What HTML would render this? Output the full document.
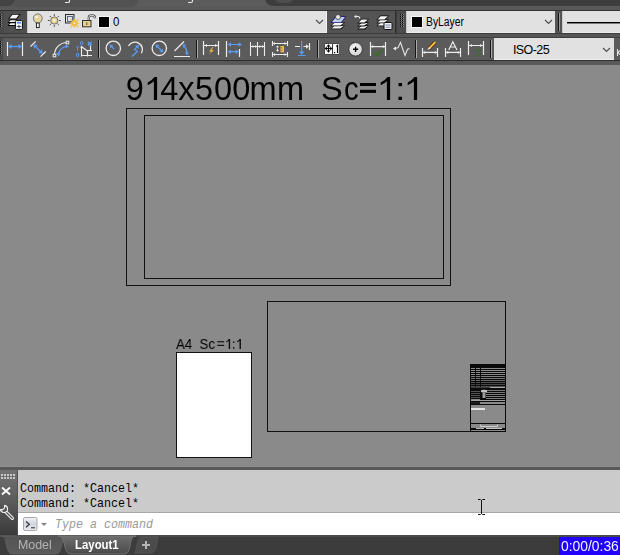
<!DOCTYPE html>
<html><head><meta charset="utf-8"><style>
*{margin:0;padding:0;box-sizing:border-box}
html,body{width:620px;height:555px;overflow:hidden;background:#8a8a8a;font-family:"Liberation Sans",sans-serif;position:relative}
.a{position:absolute}
#ov{position:absolute;left:0;top:0;width:620px;height:555px}
</style></head><body>

<!-- ===== top strip ===== -->
<div class="a" style="left:0;top:0;width:620px;height:10px;background:#5b5b5b"></div>
<div class="a" style="left:10px;top:-10px;width:129px;height:17px;background:#525252;border-radius:0 0 8px 0;box-shadow:1px 0 0 #626262"></div>
<div class="a" style="left:-20px;top:-10px;width:35px;height:16px;background:#434343;border-radius:0 0 8px 0;box-shadow:1px 1px 0 #555"></div>
<div class="a" style="left:265px;top:-10px;width:400px;height:16px;background:#3d3d3d;border-radius:0 0 0 8px"></div>
<div class="a" style="left:275px;top:-10px;width:18px;height:13px;background:#4d4d4d;border-radius:0 0 5px 5px"></div>
<div class="a" style="left:0;top:7px;width:620px;height:3px;background:#585858"></div>
<div class="a" style="left:0;top:10px;width:620px;height:1px;background:#333"></div>

<!-- ===== row 1 ===== -->
<div class="a" style="left:0;top:11px;width:620px;height:22px;background:#545454"></div>
<div class="a" style="left:0;top:11px;width:4px;height:22px;background:#4a4a4a"></div>
<div class="a" style="left:4px;top:11px;width:23px;height:22px;background:#4f4f4f"></div>
<div class="a" style="left:27px;top:11px;width:300px;height:22px;background:#e1e1e1"></div>
<div class="a" style="left:395px;top:11px;width:2px;height:22px;background:#3c3c3c"></div>
<div class="a" style="left:397px;top:11px;width:9px;height:22px;background:#4c4c4c"></div>
<div class="a" style="left:406px;top:11px;width:149px;height:22px;background:#e1e1e1"></div>
<div class="a" style="left:562px;top:11px;width:58px;height:22px;background:#e1e1e1"></div>
<div class="a" style="left:567px;top:22px;width:53px;height:1px;background:#000"></div><div class="a" style="left:567px;top:23px;width:53px;height:1px;background:#7a7a7a"></div>
<div class="a" style="left:112.6px;top:14px;font-size:13px;line-height:16px;color:#000;transform:scaleX(0.88);transform-origin:0 0">0</div>
<div class="a" style="left:426px;top:13.5px;font-size:12px;line-height:16px;color:#000;transform:scaleX(0.86);transform-origin:0 0;white-space:nowrap">ByLayer</div>

<div class="a" style="left:27px;top:32px;width:300px;height:1px;background:#ececec"></div><div class="a" style="left:406px;top:32px;width:149px;height:1px;background:#ececec"></div><div class="a" style="left:562px;top:32px;width:58px;height:1px;background:#ececec"></div>
<!-- ===== gap row1/row2 ===== -->
<div class="a" style="left:0;top:33px;width:620px;height:1px;background:#3c3c3c"></div>
<div class="a" style="left:0;top:34px;width:620px;height:3px;background:#565656"></div>
<div class="a" style="left:0;top:37px;width:620px;height:1px;background:#3e3e3e"></div>

<!-- ===== row 2 ===== -->
<div class="a" style="left:0;top:38px;width:620px;height:22px;background:#5b5b5b"></div>
<div class="a" style="left:0;top:38px;width:3px;height:22px;background:#4a4a4a"></div>
<div class="a" style="left:494px;top:38px;width:120px;height:22px;background:#e1e1e1"></div>
<div class="a" style="left:513px;top:42px;font-size:12.5px;line-height:16px;color:#000;letter-spacing:-0.6px">ISO-25</div>
<div class="a" style="left:494px;top:59px;width:120px;height:1px;background:#f0f0f0"></div><div class="a" style="left:0;top:60px;width:620px;height:1px;background:#2e2e2e"></div>
<div class="a" style="left:0;top:61px;width:620px;height:4px;background:#595959"></div>

<!-- ===== drawing ===== -->
<div class="a" style="will-change:transform;left:0;top:69px;width:620px;height:40px;font-size:32.5px;line-height:40px;color:#000"><span class="a" style="left:125.7px;top:0">9</span><span class="a" style="left:160.3px;top:0">4</span><span class="a" style="left:178.2px;top:0">x</span><span class="a" style="left:194.9px;top:0">5</span><span class="a" style="left:214px;top:0">0</span><span class="a" style="left:232.2px;top:0">0</span><span class="a" style="left:249.6px;top:0">m</span><span class="a" style="left:276.9px;top:0">m</span><span class="a" style="left:321.1px;top:0">S</span><span class="a" style="left:343.5px;top:0;transform:scaleX(0.9);transform-origin:0 0">c</span></div>
<div class="a" style="left:126px;top:108px;width:325px;height:178px;border:1px solid #111"></div>
<div class="a" style="left:144px;top:115px;width:300px;height:164px;border:1px solid #111"></div>
<div class="a" style="left:267px;top:301px;width:239px;height:131px;border:1px solid #111"></div>
<div class="a" style="will-change:transform;left:176px;top:336px;font-size:14.4px;line-height:17px;color:#000;white-space:pre;transform:scaleX(0.92);transform-origin:0 0">A4  Sc</div>
<div class="a" style="left:176px;top:352px;width:76px;height:106px;border:1px solid #111;background:#fff"></div>

<!-- ===== bottom ===== -->
<div class="a" style="left:0;top:466px;width:620px;height:1px;background:#8f8f8f"></div><div class="a" style="left:0;top:467px;width:620px;height:3px;background:#585858"></div>
<div class="a" style="left:0;top:470px;width:18px;height:65px;background:linear-gradient(#727272,#5a5a5a 50%,#3a3a3a)"></div>
<div class="a" style="left:17px;top:470px;width:1px;height:65px;background:#505050"></div>
<div class="a" style="left:18px;top:470px;width:602px;height:42px;background:#cbcbcb"></div>
<div class="a" style="left:18px;top:512px;width:602px;height:1px;background:#a8a8a8"></div>
<div class="a" style="left:18px;top:513px;width:602px;height:22px;background:#fff"></div>
<div class="a" style="left:20px;top:482.3px;font-family:'Liberation Mono',monospace;font-size:11.67px;line-height:13.1px;color:#000;white-space:pre;transform:scaleY(1.15);transform-origin:0 0">Command: *Cancel*
Command: *Cancel*</div>
<div class="a" style="left:55px;top:516.6px;font-family:'Liberation Mono',monospace;font-style:italic;font-size:11.67px;line-height:15px;color:#9a9a9a;white-space:pre;transform:scaleY(1.12);transform-origin:0 0">Type a command</div>
<div class="a" style="left:0;top:535px;width:620px;height:20px;background:#3c3c3c"></div>
<div class="a" style="left:559px;top:536px;width:61px;height:19px;background:#2200ff"></div>

<svg id="ov" width="620" height="555" viewBox="0 0 620 555">
<!-- row1 grip -->
<g fill="#050505"><rect x="0" y="14" width="1" height="1"/><rect x="0" y="16" width="1" height="1"/><rect x="0" y="18" width="1" height="1"/><rect x="0" y="20" width="1" height="1"/><rect x="0" y="22" width="1" height="1"/><rect x="0" y="24" width="1" height="1"/><rect x="0" y="26" width="1" height="1"/></g>
<g fill="#8c8c8c"><rect x="1" y="14" width="1" height="1"/><rect x="1" y="16" width="1" height="1"/><rect x="1" y="18" width="1" height="1"/><rect x="1" y="20" width="1" height="1"/><rect x="1" y="22" width="1" height="1"/><rect x="1" y="24" width="1" height="1"/><rect x="1" y="26" width="1" height="1"/></g>
<!-- layer properties icon -->
<g fill="#0a0a0a"><path d="M7.5 26 L10 22.6 L16.5 22.6 L16 26 Z"/><path d="M7.5 23 L10 19.6 L17.5 19.6 L17 23 Z"/><path d="M8 19.3 L11.8 13.9 L20.6 13.9 L16.8 19.3 Z"/></g>
<g fill="#f6f6f6"><path d="M9 25 L10.5 23.2 L15.5 23.2 L15.5 25 Z"/><path d="M9 22 L10.5 20.2 L16.5 20.2 L16 22 Z"/><path d="M9.4 18.4 L12.4 14.8 L19 14.8 L16.2 18.4 Z"/></g>
<rect x="15.4" y="20.6" width="7" height="8.8" rx=".8" fill="#f6f6f6" stroke="#111" stroke-width="1"/>
<rect x="16.9" y="22" width="4.1" height="1.6" fill="#4a88ee"/>
<path d="M16.8 26.5 H21.2" stroke="#333" stroke-width=".9"/>
<path d="M19 25 L20.2 26.5 L19 28 L17.8 26.5 Z" fill="none" stroke="#5a7ab0" stroke-width=".8"/>
<!-- combobox highlight corner -->
<rect x="27" y="11" width="1" height="22" fill="#c8c8c8"/>
<!-- bulb -->
<path d="M36.3 23.2 Q33.4 21.2 33.4 18.3 A4.4 4.4 0 0 1 42.2 18.3 Q42.2 21.2 39.3 23.2 Z" fill="#e5d49e" stroke="#6e6e6e" stroke-width=".9"/>
<circle cx="36.4" cy="16.9" r="1.2" fill="#fff"/>
<rect x="36.4" y="23" width="2.8" height="4.6" fill="#fff" stroke="#111" stroke-width=".9"/>
<!-- sun -->
<path d="M58.90 20.50 L60.70 20.50 M57.55 23.75 L58.83 25.03 M54.30 25.10 L54.30 26.90 M51.05 23.75 L49.77 25.03 M49.70 20.50 L47.90 20.50 M51.05 17.25 L49.77 15.97 M54.30 15.90 L54.30 14.10 M57.55 17.25 L58.83 15.97 " stroke="#3a3a3a" stroke-width=".9"/>
<circle cx="54.3" cy="20.5" r="3.6" fill="#e6d08e" stroke="#6a6a6a" stroke-width=".9"/>
<rect x="53.2" y="19.4" width="2.2" height="2.2" fill="#fdfdfd"/>
<!-- vp freeze -->
<rect x="65.5" y="14.5" width="8.5" height="8.5" fill="none" stroke="#2a2a2a" stroke-width="1"/>
<rect x="67.5" y="16.5" width="5" height="5" fill="none" stroke="#5a6b82" stroke-width="1"/>
<g fill="#f0bf4c"><circle cx="74.5" cy="23.3" r="3.4"/><path d="M74.5 18.3 L75.3 20 L73.7 20Z M74.5 28.3 L75.3 26.6 L73.7 26.6Z M69.5 23.3 L71.2 22.5 L71.2 24.1Z M79.5 23.3 L77.8 22.5 L77.8 24.1Z"/><circle cx="71.2" cy="20" r=".9"/><circle cx="77.8" cy="20" r=".9"/><circle cx="71.2" cy="26.6" r=".9"/><circle cx="77.8" cy="26.6" r=".9"/></g>
<circle cx="74.5" cy="23.3" r=".8" fill="#fff"/>
<!-- lock -->
<path d="M88.8 20.5 V17.3 Q88.8 15.3 91.8 15.3 Q94.8 15.3 94.8 17.5 V18.3" fill="none" stroke="#3a3a3a" stroke-width="2.2"/>
<path d="M88.8 20.5 V17.3 Q88.8 15.3 91.8 15.3 Q94.8 15.3 94.8 17.5 V18.3" fill="none" stroke="#f2f2f2" stroke-width=".9"/>
<rect x="82.5" y="20.5" width="8.5" height="6.3" fill="#e6d08c" stroke="#333" stroke-width="1"/>
<rect x="86.2" y="22.3" width="1.2" height="2.8" fill="#6a6a6a"/>
<!-- color square -->
<rect x="98" y="16" width="12" height="12" fill="#f6f6f6"/>
<rect x="99" y="17" width="10" height="10" fill="#000"/>
<!-- chevron -->
<path d="M316 20 L319.5 23.5 L323 20" fill="none" stroke="#505050" stroke-width="1.2"/>
<rect x="326" y="11" width="1" height="22" fill="#f4f4f4"/>
<!-- make current -->
<path d="M330.4 29.2 L334.2 25.1 L345.0 25.1 L341.2 29.2 Z" fill="#080808"/><path d="M331.6 28.4 L334.6 25.8 L343.8 25.8 L340.4 28.4 Z" fill="#f6f6f6"/><path d="M330.4 26.2 L334.2 22.1 L345.0 22.1 L341.2 26.2 Z" fill="#080808"/><path d="M331.6 25.4 L334.6 22.8 L343.8 22.8 L340.4 25.4 Z" fill="#f6f6f6"/><path d="M330.2 23 L335.4 16.2 L346.6 16.2 L341.4 23 Z" fill="#2a1070"/><path d="M331.8 22.2 L335.9 17 L345 17 L341 22.2 Z" fill="#b9d1f0"/><circle cx="338" cy="17" r="2.5" fill="#e8e8e8" stroke="#3a3a3a" stroke-width=".8"/>
<!-- layer previous -->
<path d="M357.4 29.4 L361.2 25.3 L369.0 25.3 L365.2 29.4 Z" fill="#080808"/><path d="M358.6 28.6 L361.6 26.0 L367.8 26.0 L364.4 28.6 Z" fill="#f6f6f6"/><path d="M357.4 26.4 L361.2 22.3 L369.0 22.3 L365.2 26.4 Z" fill="#080808"/><path d="M358.6 25.6 L361.6 23.0 L367.8 23.0 L364.4 25.6 Z" fill="#f6f6f6"/><path d="M357.4 23.4 L361.2 18.7 L369.0 18.7 L365.2 23.4 Z" fill="#080808"/><path d="M358.6 22.6 L361.6 19.4 L367.8 19.4 L364.4 22.6 Z" fill="#f6f6f6"/><path d="M355.5 16.5 H358 Q359.7 16.5 359.7 18.5" fill="none" stroke="#e8e8e8" stroke-width="1.2"/><path d="M354 16.5 L356.3 14.8 L356.3 18.2 Z" fill="#e8e8e8"/>
<!-- layer states -->
<path d="M376.4 26.2 L380.2 22.1 L389.0 22.1 L385.2 26.2 Z" fill="#080808"/><path d="M377.6 25.4 L380.6 22.8 L387.8 22.8 L384.4 25.4 Z" fill="#f6f6f6"/><path d="M376.4 23.2 L380.2 19.1 L389.0 19.1 L385.2 23.2 Z" fill="#080808"/><path d="M377.6 22.4 L380.6 19.8 L387.8 19.8 L384.4 22.4 Z" fill="#f6f6f6"/><path d="M376.4 20.2 L380.2 15.5 L389.0 15.5 L385.2 20.2 Z" fill="#080808"/><path d="M377.6 19.4 L380.6 16.2 L387.8 16.2 L384.4 19.4 Z" fill="#f6f6f6"/><rect x="384" y="22.5" width="8" height="7" rx="1" fill="#eef0f4" stroke="#101010" stroke-width="1"/><path d="M385.5 25 H390.5 M385.5 27.2 H390.5" stroke="#7a8aa8" stroke-width="1"/>
<!-- separator & grip 2 -->
<rect x="395" y="11" width="1" height="22" fill="#2e2e2e"/>
<g fill="#080808"><rect x="400" y="14" width="1" height="1"/><rect x="402" y="14" width="1" height="1"/><rect x="400" y="16" width="1" height="1"/><rect x="402" y="16" width="1" height="1"/><rect x="400" y="18" width="1" height="1"/><rect x="402" y="18" width="1" height="1"/><rect x="400" y="20" width="1" height="1"/><rect x="402" y="20" width="1" height="1"/><rect x="400" y="22" width="1" height="1"/><rect x="402" y="22" width="1" height="1"/><rect x="400" y="24" width="1" height="1"/><rect x="402" y="24" width="1" height="1"/><rect x="400" y="26" width="1" height="1"/><rect x="402" y="26" width="1" height="1"/></g>
<g fill="#8a8a8a"><rect x="401" y="14" width="1" height="1"/><rect x="403" y="14" width="1" height="1"/><rect x="401" y="16" width="1" height="1"/><rect x="403" y="16" width="1" height="1"/><rect x="401" y="18" width="1" height="1"/><rect x="403" y="18" width="1" height="1"/><rect x="401" y="20" width="1" height="1"/><rect x="403" y="20" width="1" height="1"/><rect x="401" y="22" width="1" height="1"/><rect x="403" y="22" width="1" height="1"/><rect x="401" y="24" width="1" height="1"/><rect x="403" y="24" width="1" height="1"/><rect x="401" y="26" width="1" height="1"/><rect x="403" y="26" width="1" height="1"/></g>
<rect x="406" y="11" width="1" height="22" fill="#c8c8c8"/>
<rect x="411" y="16" width="12" height="12" fill="#f6f6f6"/>
<rect x="412" y="17" width="10" height="10" fill="#000"/>
<path d="M545 20 L548.5 23.5 L552 20" fill="none" stroke="#505050" stroke-width="1.2"/>
<!-- grip 3 -->
<rect x="558" y="13" width="1" height="18" fill="#141414"/>
<rect x="559" y="13" width="1" height="18" fill="#9a9a9a"/>
<rect x="562" y="11" width="1" height="22" fill="#c8c8c8"/>
<!-- row2 grip -->
<g fill="#050505"><rect x="0" y="41" width="1" height="1"/><rect x="0" y="43" width="1" height="1"/><rect x="0" y="45" width="1" height="1"/><rect x="0" y="47" width="1" height="1"/><rect x="0" y="49" width="1" height="1"/><rect x="0" y="51" width="1" height="1"/><rect x="0" y="53" width="1" height="1"/></g>
<g fill="#8c8c8c"><rect x="1" y="41" width="1" height="1"/><rect x="1" y="43" width="1" height="1"/><rect x="1" y="45" width="1" height="1"/><rect x="1" y="47" width="1" height="1"/><rect x="1" y="49" width="1" height="1"/><rect x="1" y="51" width="1" height="1"/><rect x="1" y="53" width="1" height="1"/></g>
<!-- separators -->
<g fill="#161616"><rect x="98" y="40" width="1" height="18"/><rect x="196" y="40" width="1" height="18"/><rect x="317" y="40" width="1" height="18"/><rect x="415" y="40" width="1" height="18"/><rect x="490" y="40" width="1" height="18"/></g>
<g fill="#aaaaaa"><rect x="99" y="40" width="1" height="18"/><rect x="197" y="40" width="1" height="18"/><rect x="318" y="40" width="1" height="18"/><rect x="416" y="40" width="1" height="18"/><rect x="491" y="40" width="1" height="18"/></g>
<g fill="none" stroke-linecap="butt">
<!-- linear -->
<path d="M7.5 42 V56 M22.5 42 V56" stroke="#ececec" stroke-width="1.2"/>
<path d="M10 46.5 H20" stroke="#5b9bf5" stroke-width="1.3"/>
<!-- aligned -->
<path d="M30.5 46.5 L35.7 41.3 M40.5 56.7 L45.7 51.5" stroke="#ececec" stroke-width="1.2"/>
<path d="M34.5 45.5 L41.5 52.5" stroke="#5b9bf5" stroke-width="1.2"/>
<!-- arc length -->
<path d="M54.5 55 A12.5 12.5 0 0 1 67 42.5" stroke="#ececec" stroke-width="1.2"/>
<path d="M58.5 54 A9.5 9.5 0 0 1 67 46.3" stroke="#5b9bf5" stroke-width="1.3"/>
<!-- ordinate -->
<path d="M81.5 46.5 V56.5 M81 55.5 H92 M82 47 L87.5 51 M87.5 51 V56.5 M87.5 50.5 H92 M90.5 45.5 V50.5" stroke="#ececec" stroke-width="1.15"/><path d="M81.5 45.8 L80 47.6 H83 Z" fill="#ececec"/>
<!-- radius -->
<circle cx="113.3" cy="48.3" r="7.2" stroke="#ececec" stroke-width="1.3"/>
<path d="M114 49 L110.5 45.5" stroke="#5b9bf5" stroke-width="1.2"/>
<!-- jogged -->
<path d="M128.5 46 A7.3 7.3 0 1 1 141.5 53.2" stroke="#ececec" stroke-width="1.3"/>
<path d="M132 56.5 L137.5 51.3 L134.5 49.5 L138 46" stroke="#5b9bf5" stroke-width="1.2"/>
<!-- diameter -->
<circle cx="159.3" cy="48.3" r="7.2" stroke="#ececec" stroke-width="1.3"/>
<path d="M157 46 L162 51" stroke="#5b9bf5" stroke-width="1.2"/>
<!-- angular -->
<path d="M174.5 51 L184 41.5 M174 56.5 H190" stroke="#ececec" stroke-width="1.2"/>
<path d="M183.5 45 A12 12 0 0 1 186.8 53.5" stroke="#5b9bf5" stroke-width="1.3"/>
<!-- quick dim -->
<path d="M203.5 41 V55 M218.5 41 V55 M204 45.5 H218" stroke="#ececec" stroke-width="1.2"/>
<!-- baseline -->
<path d="M226.5 41 V57 M239.5 49 V57" stroke="#ececec" stroke-width="1.2"/>
<path d="M229 44.5 H240 M229 51.7 H237" stroke="#5b9bf5" stroke-width="1.2"/>
<!-- continue -->
<path d="M250.5 42 V56 M257.5 42 V56 M264.5 42 V56 M251 46.5 H264" stroke="#ececec" stroke-width="1.1"/>
<!-- space -->
<path d="M272.5 41 V46 M287.5 41 V46 M272.5 43.5 H287.5 M272.5 52 V57 M287.5 52 V57 M272.5 54.5 H287.5" stroke="#ececec" stroke-width="1.1"/>
<path d="M277.5 46 V51" stroke="#ececec" stroke-width="1.1" stroke-dasharray="1.5 1"/>
<!-- break -->
<path d="M301.7 41 V53 M298 55.5 H305.5" stroke="#5b9bf5" stroke-width="1.2"/>
<path d="M295 46.5 H300 M303.5 46.5 H307.5 M309.5 43 V50" stroke="#ececec" stroke-width="1.2"/>
<!-- inspect -->
<path d="M370.5 42 V56 M385.5 42 V56 M371 46.6 H385" stroke="#ececec" stroke-width="1.2"/>
<path d="M373.5 52 L377 55.3 L382.5 49.5" stroke="#3d6b2e" stroke-width="2"/>
<!-- jogged linear -->
<path d="M394 48.5 L398 47.8 L400.5 42.5 L405 55.5 L407.5 49.3 L409.5 48.6" stroke="#e4e4e4" stroke-width="1.1"/>
<!-- dim edit -->
<path d="M422.5 48 V57 M437.5 48 V57 M423 52.4 H437" stroke="#ececec" stroke-width="1.2"/>
<path d="M429 48.5 L435.5 42" stroke="#4a2418" stroke-width="3.6"/>
<path d="M429 48.5 L435.5 42" stroke="#f2c13a" stroke-width="2"/>
<path d="M427 50 L429.5 47 L430.5 48.5 Z" fill="#f4f4f4"/>
<!-- dim text edit -->
<path d="M445.5 48 V57 M460.5 48 V57 M446 52.4 H460" stroke="#ececec" stroke-width="1.2"/>
<path d="M448.7 50 L452.8 41.8 L457 50 M450.3 47 H455.3" stroke="#ececec" stroke-width="1.2"/>
<!-- update -->
<path d="M468.5 41 V55 M483.5 41 V55 M469 45.5 H483" stroke="#ececec" stroke-width="1.2"/>
<path d="M476 52 A2.8 2.8 0 0 1 480.5 50.3 M480.5 53 A2.8 2.8 0 0 1 476 54.5" stroke="#3d6e2c" stroke-width="1.3"/>
<!-- ISO chevron -->
<path d="M603 48 L606.5 51.5 L610 48" stroke="#505050" stroke-width="1.2"/>
<path d="M617.5 49 V56 M618 52.5 L620 50.5 M618 52.5 L620 54.5" stroke="#e0e0e0" stroke-width="1.1"/>
</g>
<!-- arrowheads (filled) -->
<g fill="#5b9bf5">
<path d="M8 46.5 L11.5 44 L11.5 49 Z M22 46.5 L18.5 44 L18.5 49 Z"/>
<path d="M33.3 44.3 L37.7 45 L34 48.7 Z M42.7 53.7 L38.3 53 L42 49.3 Z"/>
<path d="M69 46.3 L65.5 44.2 L65.8 48.5 Z M58.5 56.5 L56.3 53 L60.7 53.2 Z"/>
<path d="M109.5 44.5 L113.3 45.3 L110.3 48.3 Z"/>
<path d="M139 45 L135 45.8 L138.3 49.1 Z"/>
<path d="M155.5 44.5 L159.5 45.3 L156.3 48.5 Z M163.5 52.5 L159.5 51.7 L162.7 48.5 Z"/>
<path d="M182.5 44.3 L186 44.5 L183.5 48 Z M187 55.5 L184.8 52.5 L189 52.5 Z"/>
<path d="M227.5 44.5 L231 42.3 L231 46.7 Z M242 44.5 L238.5 42.3 L238.5 46.7 Z M227.5 51.7 L231 49.5 L231 53.9 Z M239 51.7 L235.5 49.5 L235.5 53.9 Z"/>
<path d="M301.7 55 L299 51.5 L304.4 51.5 Z"/>
</g>
<g fill="none" stroke="#5b9bf5" stroke-width="1"><ellipse cx="81.6" cy="43.2" rx="1.2" ry="1.8"/><ellipse cx="77.6" cy="55" rx="1.2" ry="1.8"/><path d="M76.3 46.3 L77.6 48 L78.9 46.3 M77.6 48 V50.6"/></g>
<path d="M88 42 L91.6 45.4 M91.6 42 L88 45.4" stroke="#5b9bf5" stroke-width="1.6"/>
<g fill="#ececec">
<path d="M204.5 45.5 L207 44 L207 47 Z M217.5 45.5 L215 44 L215 47 Z"/>
<path d="M309 46.5 L306 44.3 L306 48.7 Z"/>
<path d="M393 48.6 L396 46.6 L396 50.6 Z"/>
<path d="M469.5 45.5 L472 44 L472 47 Z M482.5 45.5 L480 44 L480 47 Z"/>
</g>
<!-- quick dim lightning -->
<path d="M212.5 47 L209 51.5 L211.5 51.5 L208.5 55 L214 50.3 L211.5 50.3 L213.5 47 Z" fill="#f2b93a"/>
<!-- space ruler -->
<rect x="280.5" y="46" width="3.5" height="6.3" fill="#f0c040"/>
<path d="M281 47.5 H282.3 M281 49 H282.3 M281 50.5 H282.3" stroke="#8a6a10" stroke-width=".6"/>
<!-- tolerance -->
<rect x="324.5" y="43.5" width="14.5" height="11" fill="#3a3a3a"/>
<rect x="325" y="44" width="7" height="10" fill="#fafafa"/>
<rect x="333" y="44" width="5.8" height="10" fill="#fafafa"/>
<path d="M328.5 45.5 V51.5 M325.5 48.5 H331.5" stroke="#000" stroke-width="1.2"/>
<path d="M328.5 44.2 L326.6 46.4 H330.4Z M328.5 52.8 L326.6 50.6 H330.4Z M324.6 48.5 L326.8 46.6 V50.4Z M332.4 48.5 L330.2 46.6 V50.4Z" fill="#000"/>
<rect x="334" y="52" width="1.2" height="1.2" fill="#000"/>
<path d="M336.3 46.5 L337.5 45.5 V53" stroke="#000" stroke-width="1.1" fill="none"/>
<!-- center mark -->
<defs><radialGradient id="cg" cx=".45" cy=".4" r=".6"><stop offset="0" stop-color="#f8f8f8"/><stop offset="1" stop-color="#d0d0d0"/></radialGradient></defs><circle cx="355.6" cy="49.3" r="6.8" fill="url(#cg)" stroke="#333" stroke-width=".9"/>
<path d="M353 49.3 H358.2 M355.6 46.7 V51.9" stroke="#000" stroke-width="1.4"/>
<!-- title block -->
<g><rect x="470" y="365" width="36" height="25" fill="#0a0a0a"/>
<rect x="471" y="368" width="4" height="1" fill="#8a8a8a"/>
<rect x="476" y="368" width="4" height="1" fill="#8a8a8a"/>
<rect x="481" y="368" width="24" height="1" fill="#8a8a8a"/>
<rect x="471" y="370" width="4" height="1" fill="#909090"/>
<rect x="476" y="370" width="4" height="1" fill="#909090"/>
<rect x="481" y="370" width="24" height="1" fill="#909090"/>
<rect x="471" y="372" width="4" height="1" fill="#909090"/>
<rect x="476" y="372" width="4" height="1" fill="#909090"/>
<rect x="481" y="372" width="24" height="1" fill="#909090"/>
<rect x="471" y="374" width="4" height="1" fill="#8a8a8a"/>
<rect x="476" y="374" width="4" height="1" fill="#8a8a8a"/>
<rect x="481" y="374" width="24" height="1" fill="#8a8a8a"/>
<rect x="471" y="376" width="4" height="1" fill="#808080"/>
<rect x="476" y="376" width="4" height="1" fill="#808080"/>
<rect x="481" y="376" width="24" height="1" fill="#808080"/>
<rect x="471" y="378" width="4" height="1" fill="#787878"/>
<rect x="476" y="378" width="4" height="1" fill="#787878"/>
<rect x="481" y="378" width="24" height="1" fill="#787878"/>
<rect x="471" y="380" width="4" height="1" fill="#6a6a6a"/>
<rect x="476" y="380" width="4" height="1" fill="#6a6a6a"/>
<rect x="481" y="380" width="24" height="1" fill="#6a6a6a"/>
<rect x="471" y="382" width="4" height="1" fill="#505050"/>
<rect x="476" y="382" width="4" height="1" fill="#505050"/>
<rect x="481" y="382" width="24" height="1" fill="#505050"/>
<rect x="471" y="384" width="4" height="1" fill="#484848"/>
<rect x="476" y="384" width="4" height="1" fill="#484848"/>
<rect x="481" y="384" width="24" height="1" fill="#484848"/>
<rect x="471" y="386" width="4" height="1" fill="#505050"/>
<rect x="476" y="386" width="4" height="1" fill="#505050"/>
<rect x="481" y="386" width="24" height="1" fill="#505050"/>
<rect x="471" y="387" width="19" height="1" fill="#3a3a3a"/>
<rect x="490" y="387" width="15" height="1" fill="#a8a8a8"/>
<rect x="485" y="390" width="20" height="1" fill="#7a7a7a"/>
<rect x="485" y="392" width="20" height="1" fill="#7a7a7a"/>
<rect x="485" y="394" width="20" height="1" fill="#7a7a7a"/>
<rect x="485" y="396" width="20" height="1" fill="#7a7a7a"/>
<rect x="485" y="398" width="20" height="1" fill="#7a7a7a"/>
<rect x="471" y="390" width="9" height="9" fill="#0a0a0a"/>
<rect x="471" y="391" width="9" height="1" fill="#555555"/>
<rect x="471" y="393" width="9" height="1" fill="#555555"/>
<rect x="471" y="395" width="9" height="1" fill="#555555"/>
<rect x="471" y="397" width="9" height="1" fill="#555555"/>
<rect x="480" y="389" width="6" height="11" fill="#0a0a0a"/>
<rect x="485" y="389" width="20" height="1" fill="#0a0a0a"/>
<rect x="485" y="391" width="20" height="1" fill="#0a0a0a"/>
<rect x="485" y="393" width="20" height="1" fill="#0a0a0a"/>
<rect x="485" y="395" width="20" height="1" fill="#0a0a0a"/>
<rect x="485" y="397" width="20" height="1" fill="#0a0a0a"/>
<rect x="485" y="399" width="20" height="1" fill="#0a0a0a"/>
<ellipse cx="484" cy="391.2" rx="3.2" ry="1.4" fill="#c4c4c4"/>
<rect x="482.5" y="392.5" width="3" height="5.5" fill="#9c9c9c"/>
<rect x="471" y="400" width="34" height="1" fill="#a0a0a0"/>
<rect x="471" y="401" width="34" height="1" fill="#0a0a0a"/>
<rect x="471" y="402" width="9" height="2" fill="#1a1a1a"/>
<rect x="480" y="403" width="25" height="1" fill="#8a8a8a"/>
<rect x="471" y="404" width="34" height="1" fill="#0a0a0a"/>
<rect x="471" y="408" width="14" height="2" fill="#e4e4e4"/>
<rect x="471" y="423" width="34" height="1" fill="#0a0a0a"/>
<path d="M480.5 424.5 V426.5 H497.5 V424.5" fill="none" stroke="#cfcfcf" stroke-width="1"/>
<rect x="471" y="428" width="34" height="2" fill="#0a0a0a"/>
<rect x="476" y="428" width="8" height="1" fill="#b8b8b8"/>
<rect x="486" y="428" width="16" height="1" fill="#c8c8c8"/>
<rect x="470" y="364" width="36" height="1" fill="#0a0a0a"/>
<rect x="470" y="364" width="1" height="68" fill="#0a0a0a"/>
<rect x="505" y="301" width="1" height="131" fill="#0a0a0a"/>
<rect x="470" y="431" width="36" height="1" fill="#0a0a0a"/></g>
<!-- command panel left -->
<g fill="#c8c8c8"><rect x="1" y="474" width="2" height="2"/><rect x="4" y="474" width="2" height="2"/><rect x="7" y="474" width="2" height="2"/><rect x="10" y="474" width="2" height="2"/><rect x="13" y="474" width="2" height="2"/><rect x="1" y="477" width="2" height="2"/><rect x="4" y="477" width="2" height="2"/><rect x="7" y="477" width="2" height="2"/><rect x="10" y="477" width="2" height="2"/><rect x="13" y="477" width="2" height="2"/></g>
<path d="M2 487.5 L10 494.5 M10 487.5 L2 494.5" stroke="#fafafa" stroke-width="1.9"/>
<!-- wrench -->
<path d="M6 512 L12.3 518.3" stroke="#f2f2f2" stroke-width="3.4" stroke-linecap="round"/>
<path d="M6 512 L12.3 518.3" stroke="#555" stroke-width="1.3" stroke-linecap="round"/>
<path d="M4.6 505.4 A3.6 3.6 0 1 1 0.4 509.6 L2.8 509.6 L4.6 507.8 Z" fill="#555" stroke="#f2f2f2" stroke-width="1.1" stroke-linejoin="round"/>
<!-- prompt box -->
<defs><linearGradient id="pg" x1="0" y1="0" x2="0" y2="1"><stop offset="0" stop-color="#f4f5f8"/><stop offset=".5" stop-color="#cfd3dc"/><stop offset="1" stop-color="#eceef2"/></linearGradient>
<linearGradient id="tg" x1="0" y1="0" x2="0" y2="1"><stop offset="0" stop-color="#6e6e6e"/><stop offset="1" stop-color="#4a4a4a"/></linearGradient>
<linearGradient id="mg" x1="0" y1="0" x2="0" y2="1"><stop offset="0" stop-color="#535353"/><stop offset="1" stop-color="#5c5c5c"/></linearGradient></defs>
<rect x="23.5" y="517.5" width="13.5" height="13" rx="1.5" fill="url(#pg)" stroke="#a8a8a8" stroke-width="1"/>
<path d="M26 521.5 L29.3 524.3 L26 527.2" fill="none" stroke="#333" stroke-width="1.2"/>
<path d="M31 527.8 H35" stroke="#333" stroke-width="1.1"/>
<path d="M41 523 H47 L44 526 Z" fill="#858585"/>
<!-- I-beam -->
<path d="M481.5 500 V514 M478 499.5 H480.7 M482.3 499.5 H485 M478 514.5 H480.7 M482.3 514.5 H485" stroke="#111" stroke-width="1"/>
<!-- bottom tabs -->
<rect x="0" y="535" width="620" height="2" fill="#4a4a4a"/>
<path d="M1 536 C5 536 5 538 6 543 C7.5 550 8 554 13 554 L56 554 C60 554 61 549 62 544 C63 538 63.5 536 66 536 Z" fill="url(#mg)" stroke="#626262" stroke-width=".8"/>
<path d="M58 536 C62 536 63 539 64.5 545 C66 551 67 554 72 554 L123 554 C128 554 129 551 130 546 C131 540 132 536 136 536 Z" fill="url(#tg)" stroke="#7a7a7a" stroke-width=".8"/>
<path d="M142.5 537 C139 537 138 540 137 545 C136 550 135.5 553 134.5 553 L150 553 C154 553 155.5 550 156.5 545 C157.5 540 158 537 158 537 Z" fill="#4b4b4b" stroke="#585858" stroke-width=".8"/>
<path d="M146 541 V549 M142 545 H150" stroke="#b4b4b4" stroke-width="2"/>
<!-- top strip descenders -->
<path d="M69.5 0 V1.2 Q69.5 2.5 68 2.5 H65" fill="none" stroke="#e8e8e8" stroke-width="1.1"/>
<path d="M192.5 0 V1 Q192.5 2.5 191 2.5 H188" fill="none" stroke="#e8e8e8" stroke-width="1.1"/>
<!-- big ones --><rect x="360" y="83" width="16" height="3" fill="#000"/><rect x="360" y="89.8" width="16" height="3.1" fill="#000"/><rect x="398.5" y="83" width="3.5" height="3.2" fill="#000"/><rect x="398.5" y="96.7" width="3.5" height="3.3" fill="#000"/><path d="M154.5 77 H157.1 V100 H153.9 V81.3 Q151.3 83.7 147.7 85.3 V82.4 Q151.9 80.6 154.5 77 Z" fill="#000"/><path d="M387.5 77 H390.1 V100 H386.9 V81.3 Q384.3 83.7 380.7 85.3 V82.4 Q384.9 80.6 387.5 77 Z" fill="#000"/><path d="M414.5 77 H417.1 V100 H413.9 V81.3 Q411.3 83.7 407.7 85.3 V82.4 Q411.9 80.6 414.5 77 Z" fill="#000"/>
<!-- small text --><rect x="217.2" y="341.2" width="6.9" height="1.15" fill="#111"/><rect x="217.2" y="344.8" width="6.9" height="1.15" fill="#111"/><rect x="233" y="341.4" width="1.4" height="1.5" fill="#111"/><rect x="233" y="347.1" width="1.4" height="1.6" fill="#111"/><path d="M228.70 338.9 H230.15 V348.9 H228.70 V341.10 Q227.50 341.80 226.20 342.20 V341.20 Q227.70 340.50 228.70 338.9 Z" fill="#111"/><path d="M239.50 338.9 H240.95 V348.9 H239.50 V341.10 Q238.30 341.80 237.00 342.20 V341.20 Q238.50 340.50 239.50 338.9 Z" fill="#111"/>
<!-- extra row2 details -->
<g fill="#ececec">
<path d="M251.3 46.5 L253.3 45 V48 Z M257.2 46.5 L255.2 45 V48 Z M258.2 46.5 L260.2 45 V48 Z M264.1 46.5 L262.1 45 V48 Z"/>
<path d="M273 43.5 L275 42 V45 Z M286.5 43.5 L284.5 42 V45 Z M273 54.5 L275 53 V56 Z M286.5 54.5 L284.5 53 V56 Z"/>
<path d="M277.5 45.5 L276 47.3 H279 Z M277.5 51.8 L276 50 H279 Z"/>
<path d="M371.2 46.6 L373.2 45.1 V48.1 Z M384.8 46.6 L382.8 45.1 V48.1 Z"/>
<path d="M423.2 52.4 L425.2 50.9 V53.9 Z M436.8 52.4 L434.8 50.9 V53.9 Z M446.2 52.4 L448.2 50.9 V53.9 Z M459.8 52.4 L457.8 50.9 V53.9 Z"/>
</g>
<rect x="53.2" y="54.2" width="2.6" height="2.6" fill="#5b5b5b" stroke="#ececec" stroke-width="1"/>
<rect x="66.2" y="41.2" width="2.6" height="2.6" fill="#5b5b5b" stroke="#ececec" stroke-width="1"/>
<!-- PLACEHOLDER -->
</svg>

<div class="a" style="left:18px;top:538px;font-size:12.4px;color:#b4b4b4">Model</div>
<div class="a" style="left:74.5px;top:538px;font-size:12px;color:#fff;font-weight:bold;transform:scaleX(0.95);transform-origin:0 0;white-space:nowrap">Layout1</div>
<div class="a" style="left:561px;top:538px;font-size:14.3px;line-height:17px;color:#f0f4ff;transform:scaleX(0.97);transform-origin:0 0;white-space:nowrap">0:00/0:36</div>

</body></html>
